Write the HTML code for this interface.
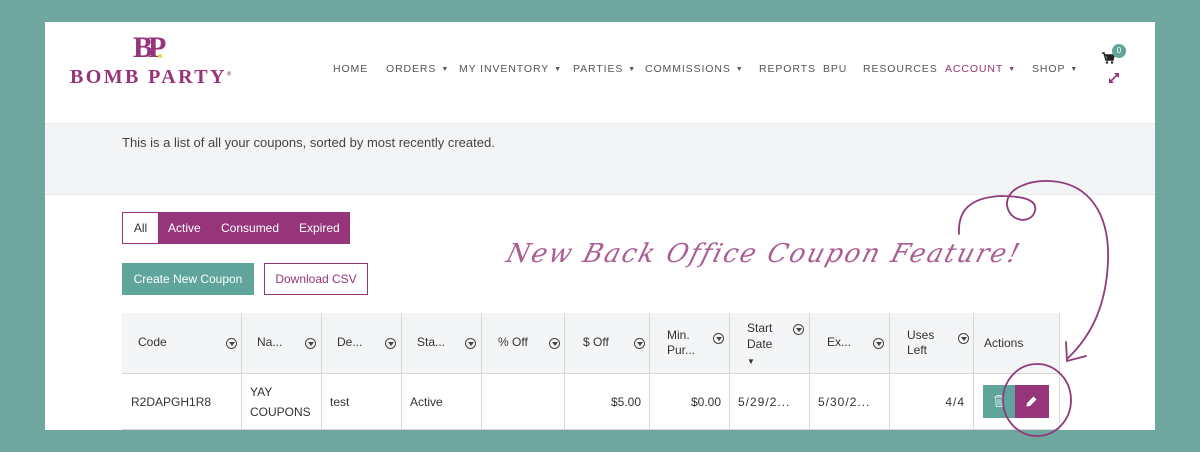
<!DOCTYPE html>
<html><head><meta charset="utf-8"><style>
*{margin:0;padding:0;box-sizing:border-box}
body{width:1200px;height:452px;background:#6fa79f;position:relative;overflow:hidden;font-family:"Liberation Sans",sans-serif;color:#333}
.panel{position:absolute;left:45px;top:22px;width:1110px;height:408px;background:#fff;overflow:hidden}
.a{position:absolute;white-space:nowrap}
.nav{top:63px;font-size:10.5px;letter-spacing:0.9px;color:#555}
.nav b{font-weight:normal;font-size:7px;margin-left:5px;position:relative;top:-1px}
.band{position:absolute;left:45px;top:123px;width:1110px;height:72px;background:#f3f4f6;border-top:1px solid #e8e8e8;border-bottom:1px solid #e8e8e8}
.th,.td{position:absolute;border-right:1px solid #d8d8d8;border-bottom:1px solid #d8d8d8;font-size:12px;color:#333}
.th{top:313px;height:61px;background:#f4f5f7}
.td{top:374px;height:56px;background:#fff}
.f{position:absolute;width:11px;height:11px;border:1px solid #444;border-radius:50%;top:25px}
.f:after{content:"";position:absolute;left:2px;top:3px;border-left:3px solid transparent;border-right:3px solid transparent;border-top:4px solid #444}
</style></head><body>
<div class="panel"></div>
<div class="a" style="left:133px;top:31px;font-family:'Liberation Serif',serif;font-size:30px;color:#96357a;font-weight:bold;letter-spacing:-5px">BP</div>
<div class="a" style="left:158px;top:54px;width:4px;height:4px;background:#d8e03a;border-radius:50%"></div>
<div class="a" style="left:70px;top:66px;font-family:'Liberation Serif',serif;font-size:20px;color:#96357a;letter-spacing:2.4px;font-weight:bold">BOMB PARTY<sup style="font-size:6px">®</sup></div>
<div class="a nav" style="left:333px">HOME</div>
<div class="a nav" style="left:386px">ORDERS<b>▼</b></div>
<div class="a nav" style="left:459px">MY INVENTORY<b>▼</b></div>
<div class="a nav" style="left:573px">PARTIES<b>▼</b></div>
<div class="a nav" style="left:645px">COMMISSIONS<b>▼</b></div>
<div class="a nav" style="left:759px">REPORTS</div>
<div class="a nav" style="left:823px">BPU</div>
<div class="a nav" style="left:863px">RESOURCES</div>
<div class="a nav" style="left:945px;color:#96357a">ACCOUNT<b>▼</b></div>
<div class="a nav" style="left:1032px">SHOP<b>▼</b></div>
<svg class="a" style="left:1102px;top:52px" width="13" height="12" viewBox="0 0 13 12"><path d="M0 1h2l2 7h7l1-5H3" fill="none" stroke="#222" stroke-width="1.5"/><path d="M4 3h8l-1 5H5z" fill="#222"/><circle cx="5" cy="10.5" r="1.2" fill="#222"/><circle cx="10" cy="10.5" r="1.2" fill="#222"/></svg>
<div class="a" style="left:1112px;top:44px;width:14px;height:14px;border-radius:50%;background:#5fa59c;color:#fff;font-size:8px;text-align:center;line-height:14px">0</div>
<svg class="a" style="left:1108px;top:72px" width="12" height="12" viewBox="0 0 12 12" stroke="#96357a" stroke-width="1.6" fill="#96357a"><path d="M2 10L10 2"/><path d="M6 1h5v5z" stroke="none"/><path d="M1 6v5h5z" stroke="none"/></svg>
<div class="band"></div>
<div class="a" style="left:122px;top:135px;font-size:13px;color:#444">This is a list of all your coupons, sorted by most recently created.</div>
<div class="a" style="left:122px;top:212px;width:228px;height:32px;background:#96357a;border:1px solid #96357a"></div>
<div class="a" style="left:123px;top:213px;width:35px;height:30px;background:#fff;font-size:12px;color:#333;text-align:center;line-height:30px">All</div>
<div class="a" style="left:168px;top:221px;font-size:12px;color:#fff">Active</div>
<div class="a" style="left:221px;top:221px;font-size:12px;color:#fff">Consumed</div>
<div class="a" style="left:299px;top:221px;font-size:12px;color:#fff">Expired</div>
<div class="a" style="left:122px;top:263px;width:132px;height:32px;background:#5fa59c;color:#fff;font-size:12px;text-align:center;line-height:32px">Create New Coupon</div>
<div class="a" style="left:264px;top:263px;width:104px;height:32px;border:1px solid #96357a;color:#96357a;font-size:12px;text-align:center;line-height:30px">Download CSV</div>
<div class="a" style="left:507px;top:239px;font-family:'DejaVu Serif','Liberation Serif',serif;font-style:italic;font-size:26px;color:#96357a;letter-spacing:2px;transform:skewX(-15deg);transform-origin:left;opacity:.8">New Back Office Coupon Feature!</div>
<div style="position:absolute;left:122px;top:313px;width:1px;height:117px;background:#d8d8d8"></div>
<div style="position:absolute;left:122px;top:313px;width:938px;height:1px;background:#d8d8d8"></div>
<div class="th" style="left:122px;width:120px"><span class="a" style="left:16px;top:22px">Code</span><i class="f" style="left:104px"></i></div>
<div class="th" style="left:242px;width:80px"><span class="a" style="left:15px;top:22px">Na...</span><i class="f" style="left:63px"></i></div>
<div class="th" style="left:322px;width:80px"><span class="a" style="left:15px;top:22px">De...</span><i class="f" style="left:63px"></i></div>
<div class="th" style="left:402px;width:80px"><span class="a" style="left:15px;top:22px">Sta...</span><i class="f" style="left:63px"></i></div>
<div class="th" style="left:482px;width:83px"><span class="a" style="left:16px;top:22px">% Off</span><i class="f" style="left:67px"></i></div>
<div class="th" style="left:565px;width:85px"><span class="a" style="left:18px;top:22px">$ Off</span><i class="f" style="left:69px"></i></div>
<div class="th" style="left:650px;width:80px"><span class="a" style="left:17px;top:15px;line-height:15px">Min.<br>Pur...</span><i class="f" style="left:63px;top:20px"></i></div>
<div class="th" style="left:730px;width:80px"><span class="a" style="left:17px;top:7px;line-height:16px">Start<br>Date<br><small style="font-size:8px">▼</small></span><i class="f" style="left:63px;top:11px"></i></div>
<div class="th" style="left:810px;width:80px"><span class="a" style="left:17px;top:22px">Ex...</span><i class="f" style="left:63px"></i></div>
<div class="th" style="left:890px;width:84px"><span class="a" style="left:17px;top:15px;line-height:15px">Uses<br>Left</span><i class="f" style="left:68px;top:20px"></i></div>
<div class="th" style="left:974px;width:86px"><span class="a" style="left:10px;top:23px">Actions</span></div>
<div class="td" style="left:122px;width:120px"><span class="a" style="left:9px;top:21px">R2DAPGH1R8</span></div>
<div class="td" style="left:242px;width:80px"><span class="a" style="left:8px;top:8px;line-height:20px">YAY<br>COUPONS</span></div>
<div class="td" style="left:322px;width:80px"><span class="a" style="left:8px;top:21px">test</span></div>
<div class="td" style="left:402px;width:80px"><span class="a" style="left:8px;top:21px">Active</span></div>
<div class="td" style="left:482px;width:83px"></div>
<div class="td" style="left:565px;width:85px"><span class="a" style="right:8px;top:21px">$5.00</span></div>
<div class="td" style="left:650px;width:80px"><span class="a" style="right:8px;top:21px">$0.00</span></div>
<div class="td" style="left:730px;width:80px"><span class="a" style="left:8px;top:21px;letter-spacing:1px">5/29/2...</span></div>
<div class="td" style="left:810px;width:80px"><span class="a" style="left:8px;top:21px;letter-spacing:1px">5/30/2...</span></div>
<div class="td" style="left:890px;width:84px"><span class="a" style="right:8px;top:21px;letter-spacing:1px">4/4</span></div>
<div class="td" style="left:974px;width:86px"></div>
<div class="a" style="left:983px;top:385px;width:32px;height:33px;background:#5fa59c"></div>
<svg class="a" style="left:994px;top:395px" width="10" height="12" viewBox="0 0 10 12" fill="none" stroke="#cfe6e2" stroke-width="1"><path d="M0 2h10M3 2V0.5h4V2M1.5 2l.7 9.5h5.6l.7-9.5M4 4v6M6 4v6"/></svg>
<div class="a" style="left:1015px;top:385px;width:34px;height:33px;background:#96357a"></div>
<svg class="a" style="left:1026px;top:396px" width="11" height="11" viewBox="0 0 11 11" fill="#fff"><path d="M7.5 0.5l3 3-6.5 6.5-3.5.5.5-3.5z"/></svg>
<div class="a" style="left:0;top:430px;width:1200px;height:22px;background:#6fa79f"></div>
<svg class="a" style="left:0;top:0" width="1200" height="452" fill="none" stroke="#8e3a7c" stroke-width="1.8" stroke-linecap="round">
<path d="M959 234 C958 214 966 198 1000 196 C1018 196 1038 198 1035 211 C1031 225 1009 222 1007 205 C1006 188 1030 180 1050 181 C1090 183 1110 215 1108 262 C1106 305 1092 335 1068 358"/>
<path d="M1066 342 L1067 361 L1086 356"/>
<ellipse cx="1037" cy="400" rx="34" ry="36"/>
</svg>
</body></html>
